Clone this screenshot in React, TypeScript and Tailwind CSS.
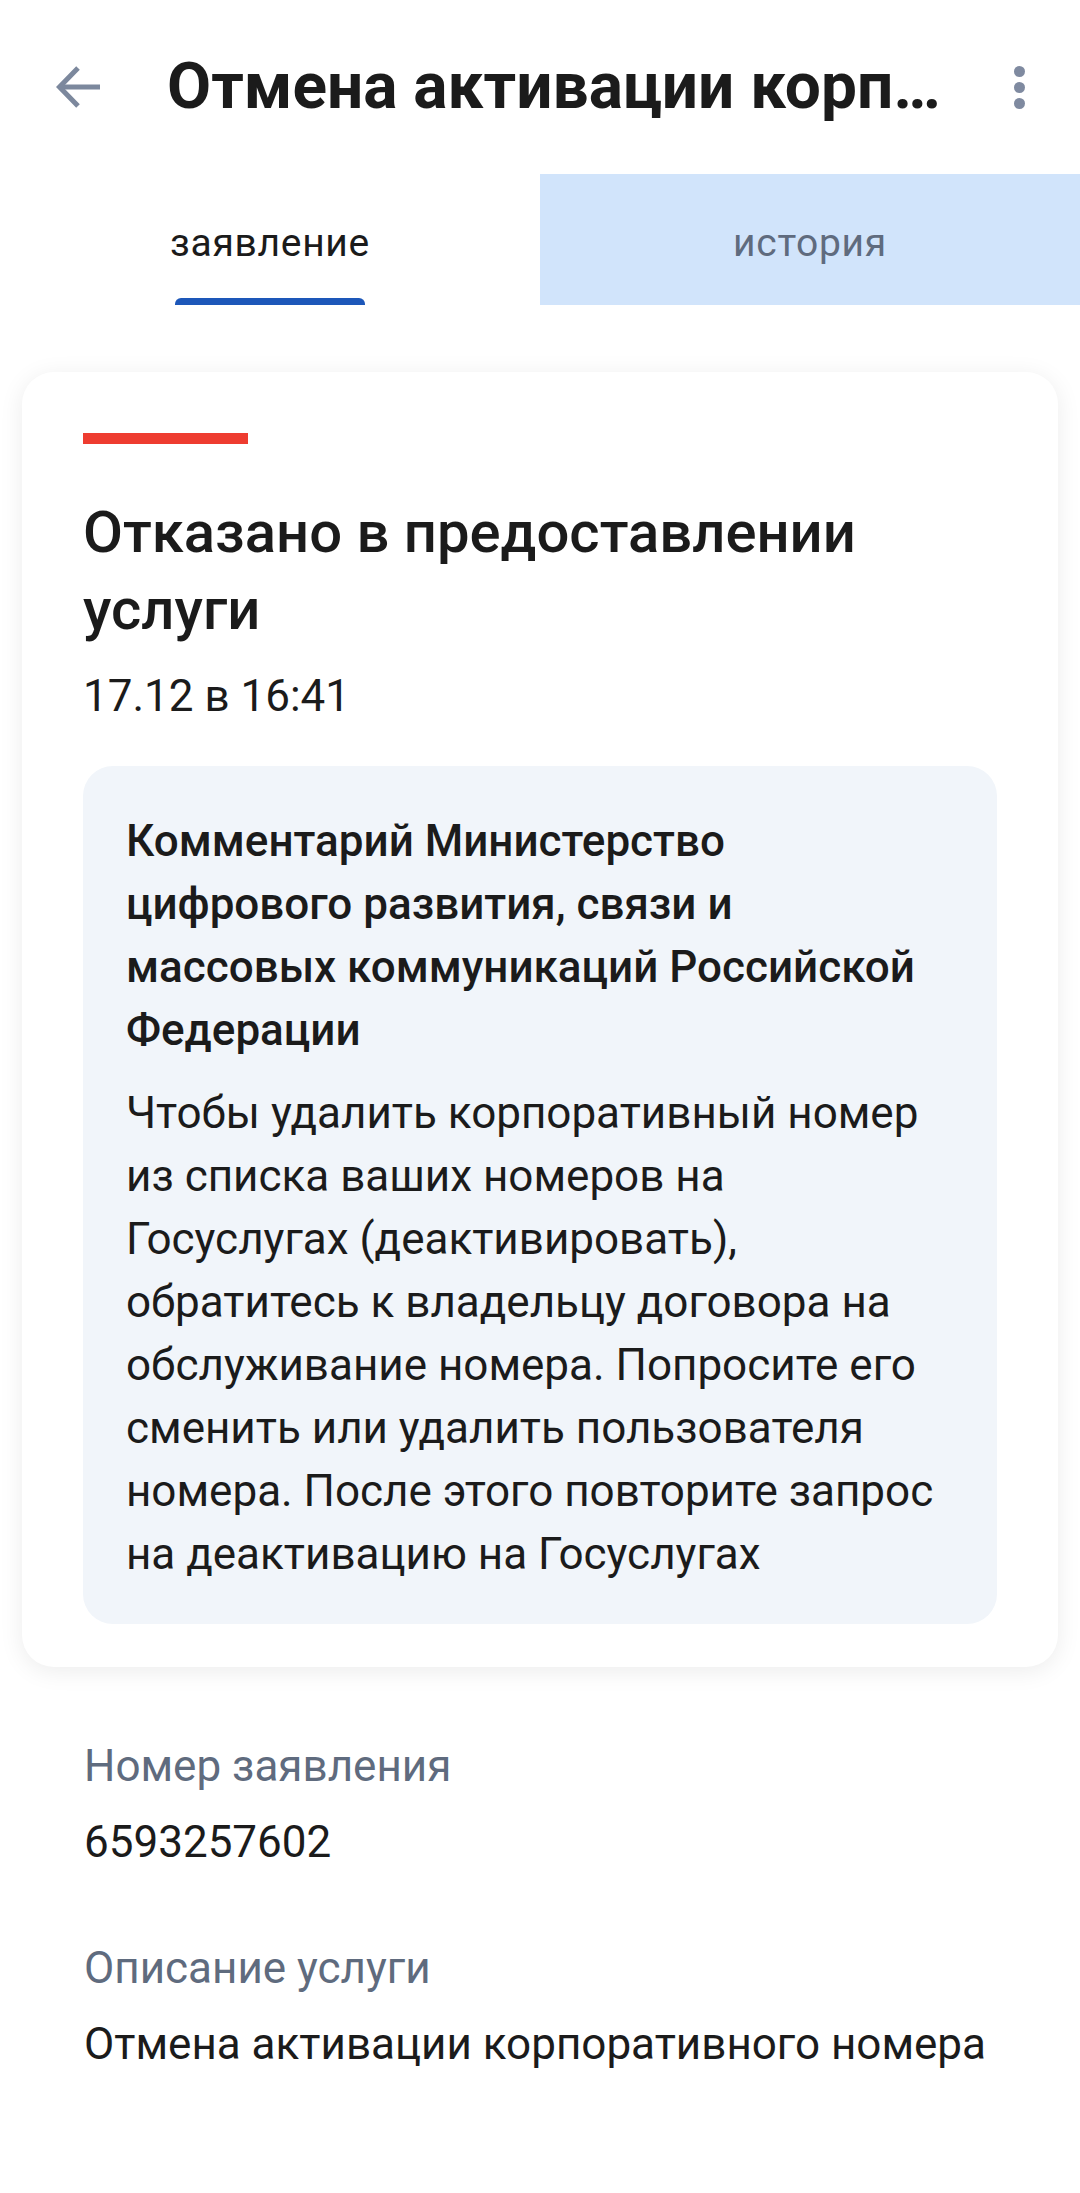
import { useState } from 'react';

const rows = [
    { label: 'Номер заявления', value: '6593257602' },
    { label: 'Описание услуги', value: 'Отмена активации корпоративного номера' },
];

export default function App() {
    const [tab, setTab] = useState(0);

    return (
        <main className="min-h-screen bg-white text-[#1b1b1b] font-['Roboto',sans-serif]">
            {/* шапка */}
            <header className="h-[174px] flex items-center pl-[56px] pr-[50px]">
                <svg width="45" height="44" viewBox="0 0 45 44" fill="none" stroke="#7c889d" strokeWidth="5" strokeLinecap="butt">
                    <path d="M44 22H4" />
                    <path d="M22 3L3.5 22L22 41" strokeLinejoin="miter" />
                </svg>
                <h1 className="ml-[66px] flex-1 min-w-0 truncate text-[64px] leading-[80px] font-bold">
                    Отмена активации корп…
                </h1>
                <div className="flex flex-col items-center gap-[5px] w-[22px]">
                    <span className="w-[11px] h-[11px] rounded-full bg-[#7f8aa0]" />
                    <span className="w-[11px] h-[11px] rounded-full bg-[#7f8aa0]" />
                    <span className="w-[11px] h-[11px] rounded-full bg-[#7f8aa0]" />
                </div>
            </header>

            {/* вкладки */}
            <nav className="grid grid-cols-2 h-[131px]">
                {['заявление', 'история'].map((t, i) => (
                    <button
                        key={t}
                        onClick={() => setTab(i)}
                        className={`relative flex items-center justify-center pt-[6px] text-[39px] leading-[50px] tracking-[0.7px] ${
                            i === 0 ? 'text-[#1b1b1b]' : 'text-[#5f6b7e] bg-[#d1e4fb]'
                        }`}
                    >
                        {t}
                        {tab === i && i === 0 && (
                            <span className="absolute bottom-0 left-1/2 -translate-x-1/2 w-[190px] h-[7px] rounded-t-[6px] bg-[#1d57b9]" />
                        )}
                    </button>
                ))}
            </nav>

            {/* карточка статуса */}
            <section className="mx-[22px] mt-[67px] rounded-[32px] bg-white shadow-[0_4px_24px_rgba(0,0,0,0.08)] pt-[61px] px-[61px] pb-[43px]">
                <div className="w-[165px] h-[11px] bg-[#ee3c30]" />
                <h2 className="mt-[50px] text-[58px] leading-[77px] font-medium">
                    Отказано в предоставлении услуги
                </h2>
                <p className="mt-[17px] text-[44px] leading-[63px]">17.12 в 16:41</p>

                <div className="mt-[38px] rounded-[30px] bg-[#f1f5fa] pl-[43px] pr-[48px] pt-[44px] pb-[38px]">
                    <p className="text-[44px] leading-[63px] font-medium">
                        Комментарий Министерство цифрового развития, связи и массовых коммуникаций Российской Федерации
                    </p>
                    <p className="mt-[20px] text-[44px] leading-[63px]">
                        Чтобы удалить корпоративный номер из списка ваших номеров на Госуслугах (деактивировать), обратитесь к владельцу договора на обслуживание номера. Попросите его сменить или удалить пользователя номера. После этого повторите запрос на деактивацию на Госуслугах
                    </p>
                </div>
            </section>

            {/* детали */}
            <div className="mt-[68px] px-[84px] pb-[80px] flex flex-col gap-[63px]">
                {rows.map((r) => (
                    <div key={r.label}>
                        <p className="text-[44px] leading-[63px] text-[#5f6b7e]">{r.label}</p>
                        <p className="mt-[13px] text-[44px] leading-[63px]">{r.value}</p>
                    </div>
                ))}
            </div>
        </main>
    );
}
